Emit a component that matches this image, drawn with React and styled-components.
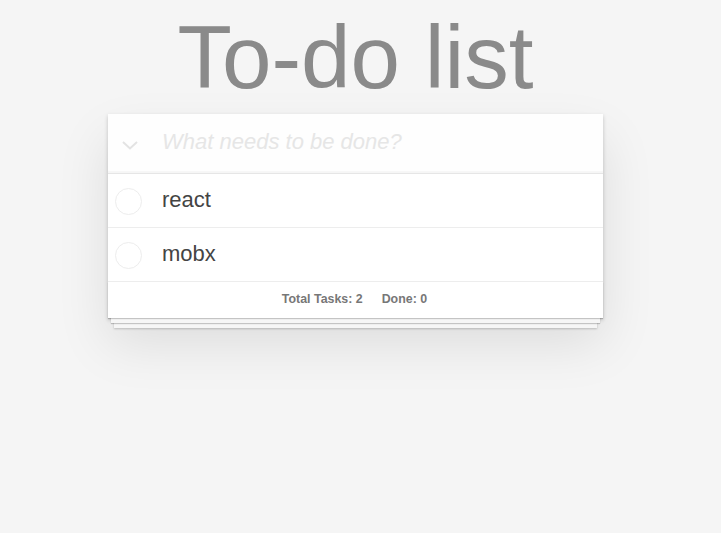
import styled, { createGlobalStyle } from "styled-components";

const Global = createGlobalStyle`
  html {
    background: #f5f5f5;
  }
  body {
    margin: 0;
    padding: 0;
    font-family: "Liberation Sans", Arial, sans-serif;
  }
`;

const Page = styled.div`
  width: 711px;
  min-height: 100vh;
  padding-top: 12px;
  box-sizing: border-box;
  display: flex;
  flex-direction: column;
  align-items: center;
`;

const Title = styled.h1`
  margin: 0 0 12px;
  font-size: 89px;
  line-height: 90px;
  font-weight: 400;
  color: #8a8a8a;
`;

const Card = styled.section`
  position: relative;
  z-index: 0;
  width: 495px;
  background: #fff;
  box-shadow: 0 2px 4px rgba(0, 0, 0, 0.2), 0 25px 50px rgba(0, 0, 0, 0.1);
`;

const Header = styled.div`
  display: flex;
  align-items: center;
  height: 59px;
  border-bottom: 1px solid #e6e6e6;
  background: rgba(0, 0, 0, 0.003);
  box-shadow: inset 0 -2px 1px rgba(0, 0, 0, 0.03);
`;

const Toggle = styled.div`
  width: 54px;
  box-sizing: border-box;
  padding: 4px 0 0 14px;
  display: flex;
`;

const Input = styled.input`
  flex: 1;
  border: none;
  outline: none;
  background: transparent;
  font-family: inherit;
  font-size: 22px;
  color: #4d4d4d;
  padding: 0 0 3px;
  &::placeholder {
    font-style: italic;
    color: #e6e6e6;
  }
`;

const List = styled.ul`
  list-style: none;
  margin: 0;
  padding: 0;
`;

const Item = styled.li`
  display: flex;
  align-items: center;
  height: 53px;
  border-bottom: 1px solid #ededed;
`;

const Check = styled.span`
  width: 27px;
  height: 27px;
  margin: 1px 18px 0 7px;
  border-radius: 50%;
  border: 1px solid #ededed;
  box-sizing: border-box;
  flex-shrink: 0;
`;

const Label = styled.span`
  font-size: 22px;
  color: #444;
  padding: 0 0 2px 2px;
`;

const Footer = styled.footer`
  position: relative;
  height: 36px;
  display: flex;
  justify-content: center;
  align-items: center;
  gap: 19px;
  padding-bottom: 2px;
  box-sizing: border-box;
  font-size: 12.4px;
  font-weight: 700;
  color: #777;

  &:before {
    content: "";
    position: absolute;
    right: 0;
    bottom: 0;
    left: 0;
    height: 36px;
    overflow: hidden;
    box-shadow: 0 1px 1px rgba(0, 0, 0, 0.2), 0 8px 0 -3px #f6f6f6,
      0 9px 1px -3px rgba(0, 0, 0, 0.2), 0 16px 0 -6px #f6f6f6,
      0 17px 2px -6px rgba(0, 0, 0, 0.2);
    z-index: -1;
  }
`;

const Stat = styled.span`
  position: relative;
  left: -1px;
`;

const todos = [
  { id: 1, title: "react" },
  { id: 2, title: "mobx" },
];

export default function App() {
  const done = 0;
  return (
    <Page>
      <Global />
      <Title>To-do list</Title>
      <Card>
        <Header>
          <Toggle>
            <svg width="16" height="9" viewBox="0 0 16 9">
              <path d="M1 1l7 6.5L15 1" fill="none" stroke="#e3e3e3" strokeWidth="2" />
            </svg>
          </Toggle>
          <Input placeholder="What needs to be done?" />
        </Header>
        <List>
          {todos.map((t) => (
            <Item key={t.id}>
              <Check />
              <Label>{t.title}</Label>
            </Item>
          ))}
        </List>
        <Footer>
          <Stat>Total Tasks: {todos.length}</Stat>
          <Stat>Done: {done}</Stat>
        </Footer>
      </Card>
    </Page>
  );
}
